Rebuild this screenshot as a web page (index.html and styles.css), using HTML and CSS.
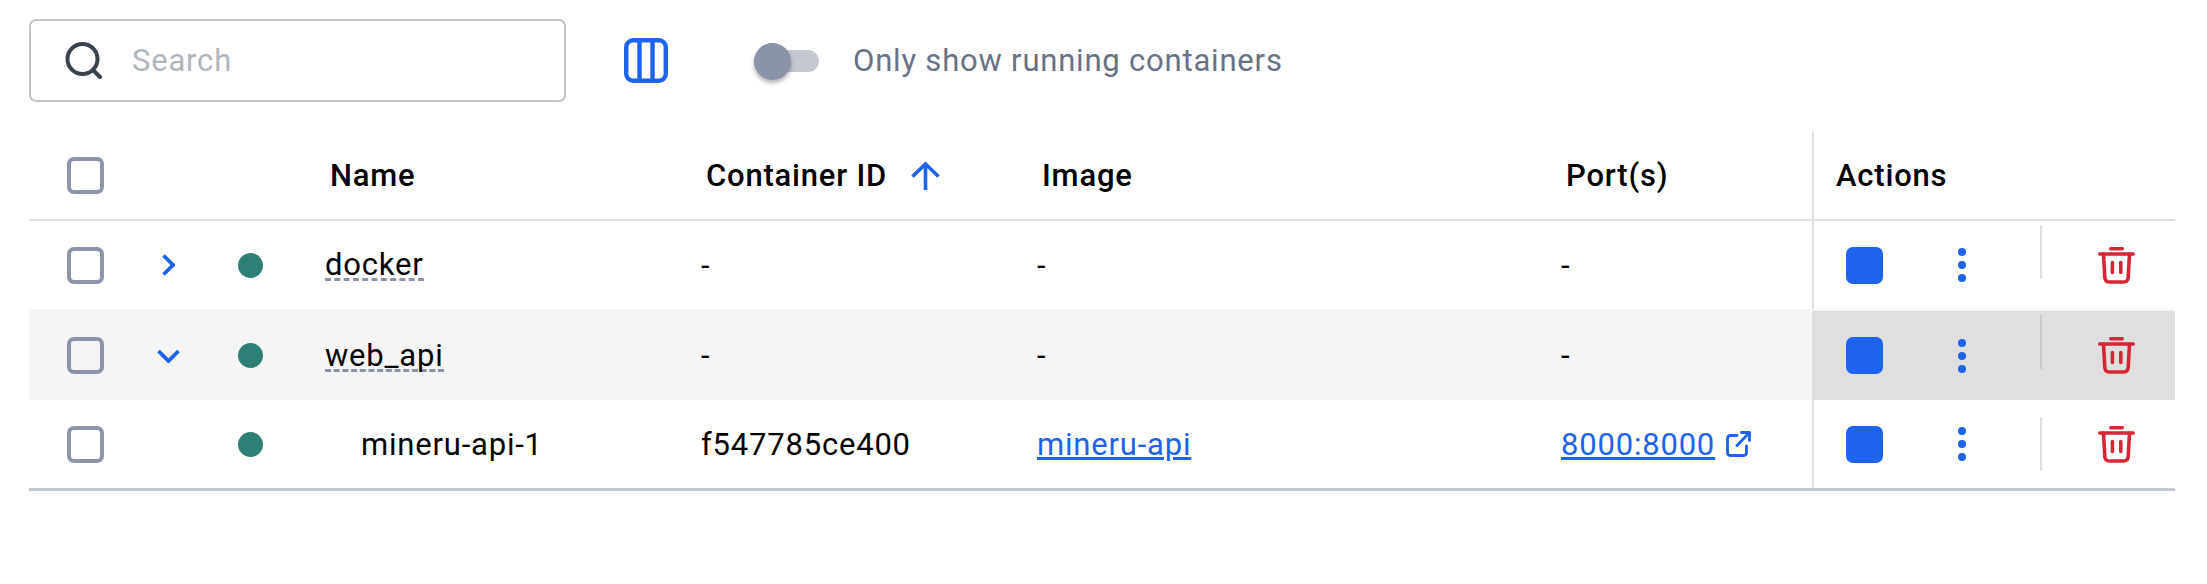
FILE: index.html
```html
<!DOCTYPE html>
<html lang="en">
<head>
    <meta charset="UTF-8">
    <title>Containers</title>
    <link rel="stylesheet" href="styles.css">
</head>
<body>

    <div class="toolbar">
        <div class="search-box">
            <svg class="search-icon" viewBox="0 0 37 37" fill="none" stroke="#3a424d" stroke-width="4" stroke-linecap="round">
                <circle cx="17.5" cy="17" r="15"/>
                <line x1="28" y1="28" x2="35" y2="35"/>
            </svg>
            <span class="search-placeholder">Search</span>
        </div>
        <svg class="columns-icon" viewBox="0 0 44 45" fill="none" stroke="#1d63ed" stroke-width="4.4">
            <rect x="2.200" y="2.200" width="39.600" height="40.600" rx="7"/>
            <line x1="15.500" y1="2" x2="15.500" y2="43"/>
            <line x1="28.500" y1="2" x2="28.500" y2="43"/>
        </svg>
        <div class="switch">
            <div class="switch-thumb"></div>
        </div>
        <span class="switch-label">Only show running containers</span>
    </div>

    <div class="table">
        <div class="row row-head">
            <div class="cell"><span class="checkbox"></span></div>
            <div class="cell"></div>
            <div class="cell"></div>
            <div class="cell head-label">Name</div>
            <div class="cell head-label">Container ID
                <svg class="sort-icon" viewBox="0 0 29 29" fill="none" stroke="#1d63ed" stroke-width="3.600">
                    <path d="M14.500 29V3M1.500 15.500L14.500 3l13 12.500"/>
                </svg>
            </div>
            <div class="cell head-label">Image</div>
            <div class="cell head-label">Port(s)</div>
            <div class="cell cell-actions head-label">Actions</div>
        </div>

        <div class="row">
            <div class="cell"><span class="checkbox"></span></div>
            <div class="cell cell-expand">
                <svg class="chevron-right" viewBox="0 0 13 22" fill="none" stroke="#1d63ed" stroke-width="3.800">
                    <path d="M1.500 1.500L11 11l-9.500 9.500"/>
                </svg>
            </div>
            <div class="cell"><span class="status-dot"></span></div>
            <div class="cell"><span class="project-name">docker</span></div>
            <div class="cell">-</div>
            <div class="cell">-</div>
            <div class="cell">-</div>
            <div class="cell cell-actions">
                <span class="stop-btn"></span>
                <span class="more-btn"><i></i><i></i><i></i></span>
                <span class="action-divider"></span>
                <svg class="trash-icon" viewBox="0 0 37 37" fill="none" stroke="#d52536" stroke-width="3.600" stroke-linecap="round" stroke-linejoin="round">
                    <path d="M12.800 1.800h11.400M1.800 7h33.400"/>
                    <path d="M5.500 7l1.300 23.500q.3 4.500 4.700 4.500h14q4.400 0 4.700-4.500L31.500 7"/>
                    <path d="M14.400 15.500v10M22.800 15.500v10"/>
                </svg>
            </div>
        </div>

        <div class="row row-open">
            <div class="cell"><span class="checkbox"></span></div>
            <div class="cell cell-expand">
                <svg class="chevron-down" viewBox="0 0 23 14" fill="none" stroke="#1d63ed" stroke-width="3.800">
                    <path d="M1.500 2l10 10 10-10"/>
                </svg>
            </div>
            <div class="cell"><span class="status-dot"></span></div>
            <div class="cell"><span class="project-name">web_api</span></div>
            <div class="cell">-</div>
            <div class="cell">-</div>
            <div class="cell">-</div>
            <div class="cell cell-actions">
                <span class="stop-btn"></span>
                <span class="more-btn"><i></i><i></i><i></i></span>
                <span class="action-divider"></span>
                <svg class="trash-icon" viewBox="0 0 37 37" fill="none" stroke="#d52536" stroke-width="3.600" stroke-linecap="round" stroke-linejoin="round">
                    <path d="M12.800 1.800h11.400M1.800 7h33.400"/>
                    <path d="M5.500 7l1.300 23.500q.3 4.500 4.700 4.500h14q4.400 0 4.700-4.500L31.500 7"/>
                    <path d="M14.400 15.500v10M22.800 15.500v10"/>
                </svg>
            </div>
        </div>

        <div class="row row-child">
            <div class="cell"><span class="checkbox"></span></div>
            <div class="cell"></div>
            <div class="cell"><span class="status-dot"></span></div>
            <div class="cell child-name">mineru-api-1</div>
            <div class="cell">f547785ce400</div>
            <div class="cell"><a class="link" href="#">mineru-api</a></div>
            <div class="cell">
                <a class="link" href="#">8000:8000</a>
                <svg class="external-icon" viewBox="0 0 25 26" fill="none" stroke="#1d63ed" stroke-width="2.800" stroke-linecap="round" stroke-linejoin="round">
                    <path d="M11 4.500H4.500q-3 0-3 3v14q0 3 3 3h13q3 0 3-3V15"/>
                    <path d="M11 14.500L23.500 1.500M15.500 1.500h8v8"/>
                </svg>
            </div>
            <div class="cell cell-actions">
                <span class="stop-btn"></span>
                <span class="more-btn"><i></i><i></i><i></i></span>
                <span class="action-divider"></span>
                <svg class="trash-icon" viewBox="0 0 37 37" fill="none" stroke="#d52536" stroke-width="3.600" stroke-linecap="round" stroke-linejoin="round">
                    <path d="M12.800 1.800h11.400M1.800 7h33.400"/>
                    <path d="M5.500 7l1.300 23.500q.3 4.500 4.700 4.500h14q4.400 0 4.700-4.500L31.500 7"/>
                    <path d="M14.400 15.500v10M22.800 15.500v10"/>
                </svg>
            </div>
        </div>
    </div>

</body>
</html>
```

FILE: styles.css
```css
* {
    box-sizing: border-box;
}

body {
    margin: 0;
    padding: 19px 32px 0 29px;
    background: #fff;
    font-family: Roboto, sans-serif;
    font-size: 31px;
    letter-spacing: 0.8px;
    color: #000;
}

.toolbar {
    display: flex;
    align-items: center;
    height: 83px;
    margin-bottom: 30px;
}

.search-box {
    display: flex;
    align-items: center;
    width: 537px;
    height: 83px;
    padding-left: 34px;
    border: 2px solid #c4c4c4;
    border-radius: 7px;
}

.search-icon {
    width: 37px;
    height: 37px;
}

.search-placeholder {
    margin-left: 30px;
    color: #b0b5be;
}

.columns-icon {
    width: 44px;
    height: 45px;
    margin-left: 58px;
}

.switch {
    position: relative;
    width: 65px;
    height: 22px;
    margin-left: 86px;
    border-radius: 11px;
    background: #c4c8d1;
}

.switch-thumb {
    position: absolute;
    top: -7px;
    left: 0;
    width: 37px;
    height: 37px;
    border-radius: 50%;
    background: #8b94a9;
    box-shadow: 0 3px 4px rgba(0, 0, 0, 0.3);
}

.switch-label {
    margin-left: 34px;
    color: #677285;
}

.row {
    display: grid;
    grid-template-columns: 118px 43px 135px 376px 336px 524px 251px 363px;
    height: 88px;
}

.row-head {
    height: 89px;
    border-bottom: 2px solid #e0e0e0;
}

.row-open {
    height: 91px;
    border-top: 2px solid #f5f5f5;
    background: #f5f5f5;
}

.row-open .cell-actions {
    background: #dfdfdf;
}

.row-child {
    height: 91px;
    border-bottom: 3px solid #c4c8d1;
}

.cell {
    display: flex;
    align-items: center;
}

.head-label {
    padding-left: 5px;
    font-weight: 500;
}

.checkbox {
    width: 37px;
    height: 37px;
    margin-left: 38px;
    border: 4px solid #8b94a9;
    border-radius: 7px;
}

.cell-expand {
    justify-content: center;
}

.chevron-right {
    width: 13px;
    height: 22px;
}

.chevron-down {
    width: 23px;
    height: 14px;
}

.sort-icon {
    width: 29px;
    height: 29px;
    margin-left: 24px;
}

.status-dot {
    width: 25px;
    height: 25px;
    margin-left: 48px;
    border-radius: 50%;
    background: #2e7f74;
}

.project-name {
    margin-top: 3px;
    border-bottom: 3px dashed #8b94a9;
    line-height: 26px;
}

.child-name {
    padding-left: 36px;
}

.link {
    color: #1d63ed;
}

.external-icon {
    width: 25px;
    height: 26px;
    margin-left: 11px;
}

.cell-actions {
    border-left: 2px solid #e0e0e0;
    padding-left: 32px;
}

.head-label.cell-actions {
    padding-left: 22px;
}

.stop-btn {
    flex: none;
    width: 37px;
    height: 37px;
    border-radius: 7px;
    background: #1d63ed;
}

.more-btn {
    display: flex;
    flex: none;
    flex-direction: column;
    gap: 5px;
    margin-left: 75px;
}

.more-btn i {
    width: 8px;
    height: 8px;
    border-radius: 50%;
    background: #1d63ed;
}

.action-divider {
    flex: none;
    align-self: flex-start;
    width: 2px;
    height: 54px;
    margin: 4px 0 0 74px;
    background: #e0e0e0;
}

.row-open .action-divider {
    background: #c8c8c8;
}

.row-child .action-divider {
    margin-top: 17px;
}

.trash-icon {
    flex: none;
    width: 37px;
    height: 37px;
    margin-left: 56px;
}
```
